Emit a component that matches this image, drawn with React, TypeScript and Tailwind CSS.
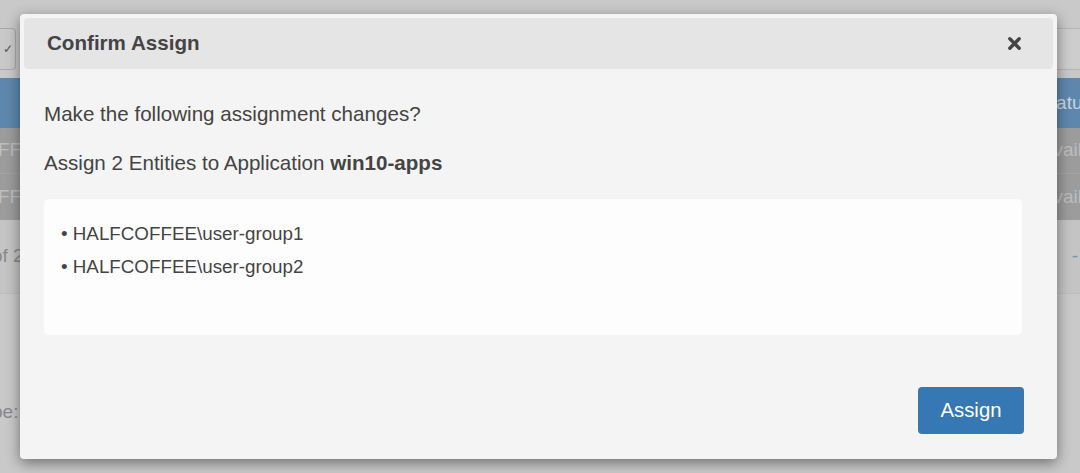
import React from "react";

const font = { fontFamily: '"Liberation Sans", Arial, sans-serif' };

const App = () => {
  return (
    <div
      className="relative w-[1080px] h-[473px] overflow-hidden bg-[#c9c9c9] text-[#444]"
      style={font}
    >
      {/* dimmed page behind the dialog */}
      <div className="flex flex-col pt-[28px]">
        <div className="flex justify-between h-[42px]">
          <div className="w-[16px] h-[42px] border border-[#a9a9a9] rounded-r-[4px] border-l-0 flex items-center justify-end pr-[2px] text-[#555] text-[12px]">
            ✓
          </div>
          <div className="w-[40px] h-[42px] border-y border-[#b5b5b5] bg-[#cdcdcd]" />
        </div>
        <div className="mt-[8px] h-[50px] bg-[#5f87ae] flex items-center justify-end">
          <span className="text-[19px] text-[#c9d5e1] -mr-[12px]">Status</span>
        </div>
        <div className="h-[46px] bg-[#9c9c9c] flex items-center justify-between text-[19px] text-[#bdbdbd] border-b border-[#a4a4a4]">
          <span className="-ml-[2px]">FF</span>
          <span className="-mr-[2px]">Avail</span>
        </div>
        <div className="h-[46px] bg-[#9c9c9c] flex items-center justify-between text-[19px] text-[#bdbdbd]">
          <span className="-ml-[2px]">FF</span>
          <span className="-mr-[2px]">Avail</span>
        </div>
        <div className="h-[74px] bg-[#c4c4c4] flex items-center justify-between text-[19px] text-[#8a8a8a] border-b border-[#bdbdbd]">
          <span className="-ml-[8px]">of 2</span>
          <span className="text-[#7e95ab] mr-[2px]">-</span>
        </div>
        <div className="h-[98px]" />
        <div className="h-[40px] flex items-center text-[19px] text-[#8a8a8a]">
          <span className="-ml-[28px]">Type:</span>
        </div>
      </div>

      {/* dialog */}
      <div className="absolute left-[20px] top-[14px] w-[1037px] h-[445px] bg-[#f4f4f4] rounded-[4px] shadow-[0_4px_14px_rgba(0,0,0,0.45)] flex flex-col p-[4px]">
        <div className="h-[51px] bg-[#e5e5e5] rounded-[4px] flex items-center justify-between pl-[23px] pr-[31px]">
          <h2 className="text-[20.6px] font-bold text-[#444]">Confirm Assign</h2>
          <button type="button" className="text-[#444]">
            <svg width="15" height="15" viewBox="0 0 16 16">
              <path
                d="M3 3 L13 13 M13 3 L3 13"
                stroke="#444"
                strokeWidth="3.6"
                strokeLinecap="round"
              />
            </svg>
          </button>
        </div>

        <div className="flex flex-col pl-[20px] pr-[31px] pt-[31px] text-[20.6px] text-[#444]">
          <p className="leading-[28px]">Make the following assignment changes?</p>
          <p className="leading-[28px] mt-[21px]">
            Assign 2 Entities to Application <b>win10-apps</b>
          </p>
          <div className="mt-[22px] h-[136px] bg-[#fdfdfd] rounded-[5px] pt-[21px] pl-[17px] text-[18.8px]">
            <div className="leading-[27px] mb-[6px]">• HALFCOFFEE\user-group1</div>
            <div className="leading-[27px]">• HALFCOFFEE\user-group2</div>
          </div>
          <div className="flex justify-end mt-[52px]">
            <button
              type="button"
              className="w-[106px] h-[47px] bg-[#3578b4] rounded-[4px] text-white text-[20.3px] -mr-[2px]"
            >
              Assign
            </button>
          </div>
        </div>
      </div>
    </div>
  );
};

export default App;
